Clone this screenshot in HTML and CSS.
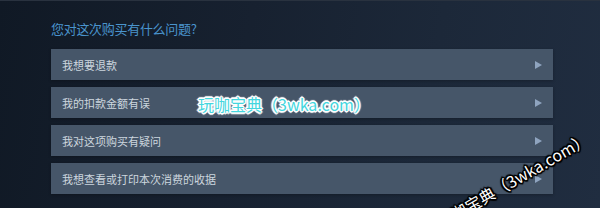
FILE: index.html
```html
<!DOCTYPE html>
<html lang="zh-CN">
<head>
<meta charset="utf-8">
<title>帮助</title>
<link rel="stylesheet" href="styles.css">
</head>
<body>
<div class="page">
  <div class="wizard">
    <h2 class="title">您对这次购买有什么问题?</h2>
    <div class="options">
      <a class="option" href="#"><span class="label">我想要退款</span><span class="arrow"></span></a>
      <a class="option" href="#"><span class="label">我的扣款金额有误</span><span class="arrow"></span></a>
      <a class="option" href="#"><span class="label">我对这项购买有疑问</span><span class="arrow"></span></a>
      <a class="option" href="#"><span class="label">我想查看或打印本次消费的收据</span><span class="arrow"></span></a>
    </div>
  </div>
  <div class="wm wm-cyan">玩咖宝典（3wka.com）</div>
  <div class="wm wm-dark">玩咖宝典（3wka.com）</div>
</div>
</body>
</html>
```
FILE: styles.css
```css
html, body {
  margin: 0;
  padding: 0;
}
body {
  width: 600px;
  height: 208px;
  overflow: hidden;
  font-family: "Noto Sans CJK SC", "Noto Sans", sans-serif;
}
.page {
  position: relative;
  width: 600px;
  height: 208px;
  box-sizing: border-box;
  border-top: 1px solid #29323f;
  background: linear-gradient(100deg, #101925 0%, #172130 40%, #1c2839 70%, #202d40 100%);
  overflow: hidden;
}
.wizard {
  padding: 18px 47px 0 51px;
}
.title {
  margin: 0 0 10px 0;
  font-size: 13px;
  line-height: 20px;
  font-weight: normal;
  color: #4a94cd;
  letter-spacing: -0.3px;
}
.options {
  display: flex;
  flex-direction: column;
  gap: 7px;
}
.option {
  display: flex;
  align-items: center;
  justify-content: space-between;
  height: 31px;
  padding: 0 11px;
  background: #465669;
  box-shadow: 0 1px 3px rgba(0, 0, 0, 0.25);
  text-decoration: none;
}
.label {
  font-size: 11px;
  line-height: 14px;
  color: #cdd6df;
}
.arrow {
  width: 0;
  height: 0;
  border-top: 4.5px solid transparent;
  border-bottom: 4.5px solid transparent;
  border-left: 7px solid #8fa4bf;
}
.wm {
  position: absolute;
  font-size: 16px;
  line-height: 16px;
  white-space: nowrap;
  font-weight: normal;
}
.wm-cyan {
  left: 198px;
  top: 95px;
  color: #44d6de;
  text-shadow: 1px 0 0 #fff, -1px 0 0 #fff, 0 1px 0 #fff, 0 -1px 0 #fff,
    1px 1px 0 #fff, -1px -1px 0 #fff, 1px -1px 0 #fff, -1px 1px 0 #fff,
    2px 0 1px #fff, -2px 0 1px #fff, 0 2px 1px #fff, 0 -2px 1px #fff;
}
.wm-dark {
  left: 438px;
  top: 214px;
  color: #ffffff;
  transform-origin: 0 50%;
  transform: rotate(-30deg);
  text-shadow: 1px 0 0 #000, -1px 0 0 #000, 0 1px 0 #000, 0 -1px 0 #000,
    1px 1px 0 #000, -1px -1px 0 #000, 1px -1px 0 #000, -1px 1px 0 #000,
    2px 0 1px #000, -2px 0 1px #000, 0 2px 1px #000, 0 -2px 1px #000;
}
```
